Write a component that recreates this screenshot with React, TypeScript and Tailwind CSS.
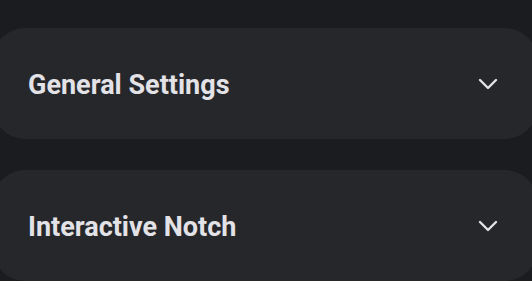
import { ChevronDown } from 'lucide-react';

const sections = ['General Settings', 'Interactive Notch'];

function SectionHeader({ title }: { title: string }) {
  return (
    <button className="-ml-[7px] w-[544px] h-[111px] shrink-0 flex items-center justify-between rounded-[32px] bg-[#26272b] pl-[35px] pr-[33px] text-left">
      <span className="pt-[3px] text-[27px] font-bold text-[#e3e2e7] leading-none">{title}</span>
      <ChevronDown className="text-[#e3e2e7]" size={32} strokeWidth={1.8} />
    </button>
  );
}

export default function App() {
  return (
    <div
      className="h-[281px] w-[532px] overflow-hidden bg-[#1b1c1f] pt-[28px] flex flex-col gap-[31px]"
      style={{ fontFamily: 'Roboto, "Noto Sans", sans-serif' }}
    >
      {sections.map((s) => (
        <SectionHeader key={s} title={s} />
      ))}
    </div>
  );
}
